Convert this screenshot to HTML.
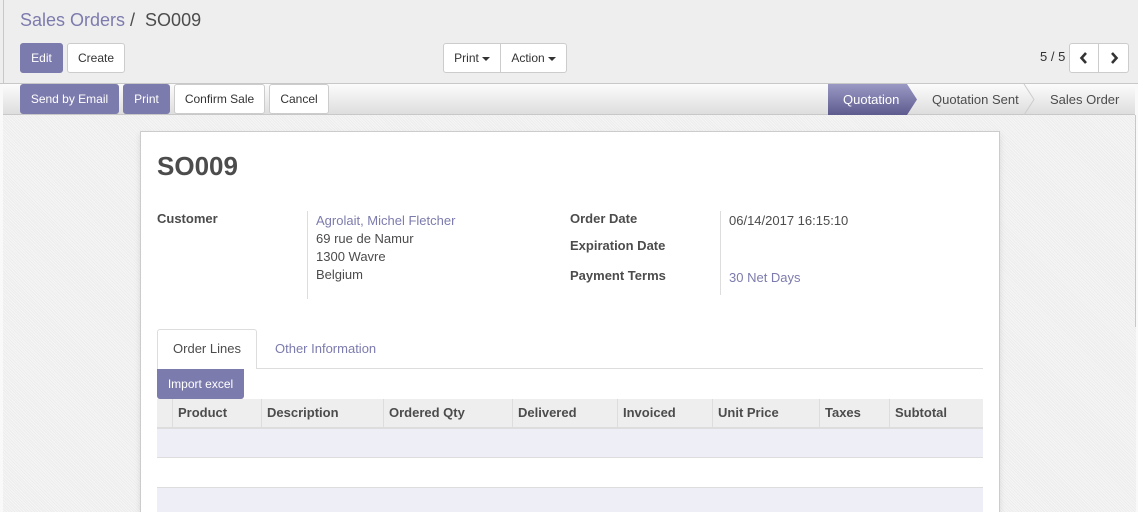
<!DOCTYPE html>
<html><head><meta charset="utf-8"><style>
*{box-sizing:border-box;margin:0;padding:0}
html{width:1138px;height:512px;overflow:hidden}
body{width:1138px;height:512px;overflow:hidden;font-family:"Liberation Sans",sans-serif;font-size:13px;color:#4c4c4c;background:#f9f9f9;position:relative}
.a{position:absolute}
.cp{left:0;top:0;width:1138px;height:84px;background:#efeeef;border-bottom:1px solid #c8c8c8}
.btn{position:absolute;height:30px;line-height:28px;font-size:12px;text-align:center;border:1px solid #ccc;background:#fff;color:#333;border-radius:3px}
.pri{background:#7c7bad;border-color:#7c7bad;color:#fff}
.sb{left:3px;top:84px;width:1132px;height:31px;background:linear-gradient(#fcfcfc,#dedede);border-bottom:1px solid #c8c8c8}
.bg{left:3px;top:115px;width:1133px;height:397px;background-color:#f5f5f5;background-image:repeating-linear-gradient(45deg,#ededed 0 1px,transparent 1px 2px)}
.sheet{left:140px;top:131px;width:860px;height:381px;background:#fff;border:1px solid #ccc;border-bottom:none;box-shadow:0 3px 6px rgba(0,0,0,.1);overflow:hidden}
.lbl{position:absolute;font-weight:bold;font-size:13px;color:#4c4c4c}
.v{position:absolute;font-size:13px}
.lnk{color:#7c7bad}
.th{position:absolute;top:0;height:29px;line-height:28px;font-weight:bold;border-left:1px solid #ddd;padding-left:5px}
.caret{display:inline-block;width:0;height:0;border-left:4px solid transparent;border-right:4px solid transparent;border-top:4px solid #333;vertical-align:middle;margin-left:3px}
</style></head><body>
<div class="a cp"></div>
<div class="a" style="left:3px;top:0;width:1px;height:512px;background:#c8c8c8"></div>
<div class="a" style="left:20px;top:10px;font-size:18px;color:#7c7bad">Sales Orders <span style="color:#4c4c4c">/&nbsp; SO009</span></div>
<div class="btn pri" style="left:20px;top:43px;width:43px">Edit</div>
<div class="btn" style="left:67px;top:43px;width:58px">Create</div>
<div class="btn" style="left:443px;top:43px;width:58px;border-radius:3px 0 0 3px">Print<span class="caret"></span></div>
<div class="btn" style="left:500px;top:43px;width:67px;border-radius:0 3px 3px 0">Action<span class="caret"></span></div>
<div class="a" style="left:1040px;top:49px;font-size:13px;color:#333">5 / 5</div>
<div class="btn" style="left:1069px;top:43px;width:30px;border-radius:3px 0 0 3px"><svg width="10" height="12" viewBox="0 0 10 12" style="margin-top:8px"><path d="M7 1L2.5 6L7 11" stroke="#333" stroke-width="2.6" fill="none"/></svg></div>
<div class="btn" style="left:1098px;top:43px;width:31px;border-radius:0 3px 3px 0"><svg width="10" height="12" viewBox="0 0 10 12" style="margin-top:8px"><path d="M3 1L7.5 6L3 11" stroke="#333" stroke-width="2.6" fill="none"/></svg></div>
<div class="a sb"></div>
<div class="btn pri" style="left:20px;top:84px;width:99px">Send by Email</div>
<div class="btn pri" style="left:123px;top:84px;width:47px">Print</div>
<div class="btn" style="left:174px;top:84px;width:91px">Confirm Sale</div>
<div class="btn" style="left:269px;top:84px;width:60px">Cancel</div>
<svg class="a" style="left:828px;top:84px" width="310" height="31">
<defs><linearGradient id="g" x1="0" y1="0" x2="0" y2="1"><stop offset="0" stop-color="#9a99c4"/><stop offset="1" stop-color="#5d5b8e"/></linearGradient></defs>
<path d="M0 0H79L89 15.5L79 31H0Z" fill="url(#g)"/>
<path d="M196 0L206 15.5L196 31" stroke="#ccc" fill="none"/>
<text x="15" y="20" fill="#fff" font-size="13" font-family="Liberation Sans">Quotation</text>
<text x="104" y="20" fill="#4c4c4c" font-size="13" font-family="Liberation Sans">Quotation Sent</text>
<text x="222" y="20" fill="#4c4c4c" font-size="13" font-family="Liberation Sans">Sales Order</text>
</svg>
<div class="a bg"></div>
<div class="a" style="left:1135px;top:115px;width:1px;height:212px;background:#c8c8c8"></div>
<div class="a sheet">
<div class="a" style="left:16px;top:19px;font-size:26px;font-weight:bold;color:#4c4c4c">SO009</div>
<div class="lbl" style="left:16px;top:79px">Customer</div>
<div class="a" style="left:166px;top:79px;width:1px;height:88px;background:#ddd"></div>
<div class="v lnk" style="left:175px;top:81px">Agrolait, Michel Fletcher</div>
<div class="v" style="left:175px;top:99px">69 rue de Namur</div>
<div class="v" style="left:175px;top:117px">1300 Wavre</div>
<div class="v" style="left:175px;top:135px">Belgium</div>
<div class="lbl" style="left:429px;top:79px">Order Date</div>
<div class="lbl" style="left:429px;top:106px">Expiration Date</div>
<div class="lbl" style="left:429px;top:136px">Payment Terms</div>
<div class="a" style="left:579px;top:79px;width:1px;height:84px;background:#ddd"></div>
<div class="v" style="left:588px;top:81px">06/14/2017 16:15:10</div>
<div class="v lnk" style="left:588px;top:138px">30 Net Days</div>
<div class="a" style="left:16px;top:236px;width:826px;height:1px;background:#ddd"></div>
<div class="a" style="left:16px;top:197px;width:100px;height:40px;background:#fff;border:1px solid #ddd;border-bottom:none;border-radius:3px 3px 0 0;text-align:center;line-height:38px">Order Lines</div>
<div class="v lnk" style="left:134px;top:209px">Other Information</div>
<div class="a" style="left:16px;top:237px;width:87px;height:30px;background:#7c7bad;color:#fff;border-radius:0 0 3px 3px;font-size:12px;line-height:30px;text-align:center">Import excel</div>
<div class="a" style="left:16px;top:267px;width:826px;height:30px;background:#eee;border-bottom:2px solid #ddd">
<div class="th" style="left:15px">Product</div>
<div class="th" style="left:104px">Description</div>
<div class="th" style="left:226px">Ordered Qty</div>
<div class="th" style="left:355px">Delivered</div>
<div class="th" style="left:460px">Invoiced</div>
<div class="th" style="left:555px">Unit Price</div>
<div class="th" style="left:662px">Taxes</div>
<div class="th" style="left:732px">Subtotal</div>
</div>
<div class="a" style="left:16px;top:297px;width:826px;height:29px;background:#eeeef6;border-bottom:1px solid #ddd"></div>
<div class="a" style="left:16px;top:355px;width:826px;height:40px;background:#eeeef6;border-top:1px solid #ddd"></div>
</div>
</body></html>
